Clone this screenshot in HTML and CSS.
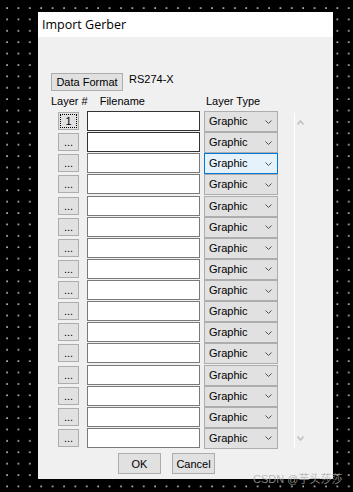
FILE: index.html
```html
<!DOCTYPE html>
<html lang="en">
<head>
  <meta charset="UTF-8" />
  <title>Import Gerber</title>
  <link rel="stylesheet" href="styles.css">
</head>
<body>
  <div class="dialog">
    <div class="titlebar">Import Gerber</div>

    <div class="content">
      <div class="format">
        <button class="btn btn-format">Data Format</button>
        <span class="format-value">RS274-X</span>
      </div>

      <div class="headers">
        <span class="head-layer">Layer #</span>
        <span class="head-file">Filename</span>
        <span class="head-type">Layer Type</span>
      </div>

      <div class="grid">
        <div class="rows">
          <div class="row">
            <button class="btn num-btn"><span class="focus">1</span></button>
            <input class="file dark" type="text" />
            <div class="combo"><span>Graphic</span><svg class="chev" width="7" height="4" viewBox="0 0 7 4"><polyline points="0.5,0.5 3.5,3.5 6.5,0.5" /></svg></div>
          </div>
          <div class="row">
            <button class="btn num-btn">...</button>
            <input class="file dark" type="text" />
            <div class="combo"><span>Graphic</span><svg class="chev" width="7" height="4" viewBox="0 0 7 4"><polyline points="0.5,0.5 3.5,3.5 6.5,0.5" /></svg></div>
          </div>
          <div class="row">
            <button class="btn num-btn">...</button>
            <input class="file" type="text" />
            <div class="combo active"><span>Graphic</span><svg class="chev" width="7" height="4" viewBox="0 0 7 4"><polyline points="0.5,0.5 3.5,3.5 6.5,0.5" /></svg></div>
          </div>
          <div class="row">
            <button class="btn num-btn">...</button>
            <input class="file" type="text" />
            <div class="combo"><span>Graphic</span><svg class="chev" width="7" height="4" viewBox="0 0 7 4"><polyline points="0.5,0.5 3.5,3.5 6.5,0.5" /></svg></div>
          </div>
          <div class="row">
            <button class="btn num-btn">...</button>
            <input class="file" type="text" />
            <div class="combo"><span>Graphic</span><svg class="chev" width="7" height="4" viewBox="0 0 7 4"><polyline points="0.5,0.5 3.5,3.5 6.5,0.5" /></svg></div>
          </div>
          <div class="row">
            <button class="btn num-btn">...</button>
            <input class="file" type="text" />
            <div class="combo"><span>Graphic</span><svg class="chev" width="7" height="4" viewBox="0 0 7 4"><polyline points="0.5,0.5 3.5,3.5 6.5,0.5" /></svg></div>
          </div>
          <div class="row">
            <button class="btn num-btn">...</button>
            <input class="file" type="text" />
            <div class="combo"><span>Graphic</span><svg class="chev" width="7" height="4" viewBox="0 0 7 4"><polyline points="0.5,0.5 3.5,3.5 6.5,0.5" /></svg></div>
          </div>
          <div class="row">
            <button class="btn num-btn">...</button>
            <input class="file" type="text" />
            <div class="combo"><span>Graphic</span><svg class="chev" width="7" height="4" viewBox="0 0 7 4"><polyline points="0.5,0.5 3.5,3.5 6.5,0.5" /></svg></div>
          </div>
          <div class="row">
            <button class="btn num-btn">...</button>
            <input class="file" type="text" />
            <div class="combo"><span>Graphic</span><svg class="chev" width="7" height="4" viewBox="0 0 7 4"><polyline points="0.5,0.5 3.5,3.5 6.5,0.5" /></svg></div>
          </div>
          <div class="row">
            <button class="btn num-btn">...</button>
            <input class="file" type="text" />
            <div class="combo"><span>Graphic</span><svg class="chev" width="7" height="4" viewBox="0 0 7 4"><polyline points="0.5,0.5 3.5,3.5 6.5,0.5" /></svg></div>
          </div>
          <div class="row">
            <button class="btn num-btn">...</button>
            <input class="file" type="text" />
            <div class="combo"><span>Graphic</span><svg class="chev" width="7" height="4" viewBox="0 0 7 4"><polyline points="0.5,0.5 3.5,3.5 6.5,0.5" /></svg></div>
          </div>
          <div class="row">
            <button class="btn num-btn">...</button>
            <input class="file" type="text" />
            <div class="combo"><span>Graphic</span><svg class="chev" width="7" height="4" viewBox="0 0 7 4"><polyline points="0.5,0.5 3.5,3.5 6.5,0.5" /></svg></div>
          </div>
          <div class="row">
            <button class="btn num-btn">...</button>
            <input class="file" type="text" />
            <div class="combo"><span>Graphic</span><svg class="chev" width="7" height="4" viewBox="0 0 7 4"><polyline points="0.5,0.5 3.5,3.5 6.5,0.5" /></svg></div>
          </div>
          <div class="row">
            <button class="btn num-btn">...</button>
            <input class="file" type="text" />
            <div class="combo"><span>Graphic</span><svg class="chev" width="7" height="4" viewBox="0 0 7 4"><polyline points="0.5,0.5 3.5,3.5 6.5,0.5" /></svg></div>
          </div>
          <div class="row">
            <button class="btn num-btn">...</button>
            <input class="file" type="text" />
            <div class="combo"><span>Graphic</span><svg class="chev" width="7" height="4" viewBox="0 0 7 4"><polyline points="0.5,0.5 3.5,3.5 6.5,0.5" /></svg></div>
          </div>
          <div class="row">
            <button class="btn num-btn">...</button>
            <input class="file" type="text" />
            <div class="combo"><span>Graphic</span><svg class="chev" width="7" height="4" viewBox="0 0 7 4"><polyline points="0.5,0.5 3.5,3.5 6.5,0.5" /></svg></div>
          </div>
        </div>

        <!-- disabled scrollbar -->
        <div class="scroll">
          <svg class="arrow" width="7" height="5" viewBox="0 0 7 5"><polyline points="0.5,4.5 3.5,1 6.5,4.5" /></svg>
          <svg class="arrow" width="7" height="5" viewBox="0 0 7 5"><polyline points="0.5,0.5 3.5,4 6.5,0.5" /></svg>
        </div>
      </div>

      <div class="actions">
        <button class="btn btn-action">OK</button>
        <button class="btn btn-action">Cancel</button>
      </div>
    </div>
  </div>

  <div class="watermark">CSDN @芋头莎莎</div>
</body>
</html>
```

FILE: styles.css
```css
body {
  margin: 0;
  padding: 12px 0 0 38px;
  width: 353px;
  height: 492px;
  box-sizing: border-box;
  overflow: hidden;
  position: relative;
  background-color: #000;
  background-image: radial-gradient(circle at 1px 1px, #fff 0.5px, transparent 0.9px);
  background-size: 11.4px 11.4px;
  background-position: 6px 7px;
  font-family: "Liberation Sans", Arial, sans-serif;
  font-size: 11px;
  color: #000;
}
.dialog {
  width: 295px;
  height: 467px;
  background: #f0f0f0;
}
.titlebar {
  height: 25px;
  background: #fff;
  padding-left: 4px;
  display: flex;
  align-items: center;
  font-family: "Open Sans", "Noto Sans", sans-serif;
  font-size: 12.5px;
  color: #000;
}
.content {
  padding: 36px 0 0 13px;
}
.btn {
  background: #e1e1e1;
  border: 1px solid #adadad;
  box-sizing: border-box;
  padding: 0;
  margin: 0;
  font-family: inherit;
  font-size: 11px;
  color: #000;
}
.format {
  display: flex;
  height: 18px;
}
.btn-format {
  width: 72px;
  height: 18px;
}
.format-value {
  margin-left: 6px;
  line-height: 13px;
}
.headers {
  display: flex;
  height: 13px;
  line-height: 13px;
  margin-top: 4px;
}
.head-file { margin-left: 12px; }
.head-type { margin-left: 61px; }
.grid {
  display: flex;
  margin-top: 3px;
}
.rows {
  display: flex;
  flex-direction: column;
}
.row {
  display: flex;
  align-items: flex-start;
  height: 21.13px;
}
.num-btn {
  width: 21px;
  height: 18px;
  margin: 1px 0 0 7px;
  line-height: 14px;
  display: flex;
  align-items: center;
  justify-content: center;
}
.focus {
  display: block;
  width: 15px;
  height: 12px;
  border: 1px dotted #000;
  line-height: 12px;
  text-align: center;
}
.file {
  width: 113px;
  height: 20px;
  margin: 0 0 0 8px;
  padding: 0;
  box-sizing: border-box;
  border: 1px solid #7a7a7a;
  background: #fff;
  outline: none;
}
.file.dark { border-color: #333; }
.combo {
  width: 74px;
  height: 21px;
  margin-left: 4px;
  box-sizing: border-box;
  border: 1px solid #adadad;
  background: #e1e1e1;
  display: flex;
  align-items: center;
  justify-content: space-between;
  padding: 0 4px 0 4px;
  line-height: 19px;
}
.combo.active {
  border-color: #0078d7;
  background: #e5f1fb;
}
.chev {
  margin-right: 1px;
}
.chev polyline {
  fill: none;
  stroke: #505050;
  stroke-width: 1;
}
.scroll {
  width: 16px;
  height: 335px;
  margin: 2px 0 0 16px;
  border-left: 1px solid #fff;
  box-sizing: border-box;
  display: flex;
  flex-direction: column;
  justify-content: space-between;
  padding: 7px 0 7px 2px;
}
.arrow polyline {
  fill: none;
  stroke: #c0c0c0;
  stroke-width: 1.6;
}
.actions {
  display: flex;
  gap: 11px;
  margin: 4px 0 0 67px;
}
.btn-action {
  width: 43px;
  height: 21px;
}
.watermark {
  position: absolute;
  left: 253px;
  top: 470px;
  font-family: "Liberation Sans", "Noto Sans CJK SC", sans-serif;
  font-size: 11px;
  color: rgba(170, 170, 170, 0.8);
  white-space: nowrap;
}
```
